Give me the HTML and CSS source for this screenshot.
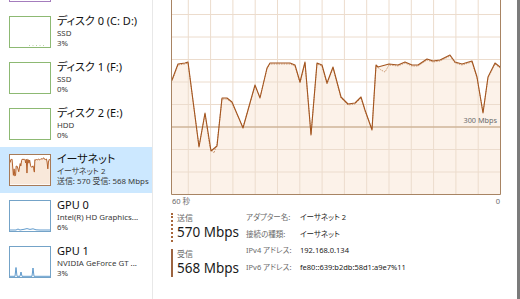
FILE: index.html
```html
<!DOCTYPE html>
<html lang="ja">
<head>
<meta charset="utf-8">
<title>パフォーマンス - イーサネット</title>
<link rel="stylesheet" href="styles.css">
</head>
<body>
<div class="window">
  <aside class="sidebar">
    <ul class="list">
      <li class="item">
        <div class="thumb thumb-mem"></div>
      </li>
      <li class="item">
        <div class="thumb thumb-disk">
          <svg viewBox="0 0 40 30"><line class="disk-dots" x1="19" y1="28.5" x2="36" y2="28.5"/></svg>
        </div>
        <div class="info"><div class="title">ディスク 0 (C: D:)</div><div class="sub">SSD</div><div class="sub">3%</div></div>
      </li>
      <li class="item">
        <div class="thumb thumb-disk"></div>
        <div class="info"><div class="title">ディスク 1 (F:)</div><div class="sub">SSD</div><div class="sub">0%</div></div>
      </li>
      <li class="item">
        <div class="thumb thumb-disk"></div>
        <div class="info"><div class="title">ディスク 2 (E:)</div><div class="sub">HDD</div><div class="sub">0%</div></div>
      </li>
      <li class="item selected">
        <div class="thumb thumb-eth">
          <svg viewBox="0 0 40 30">
            <g transform="scale(0.1212 0.19) translate(0 -40)">
              <polygon class="eth-fill" points="1,194 1,80 7,64 14,63 17,62 28,147 34,113 40,151 46,146 51,98 56,98 61,102 72,128 84,85 89,98 96,68 99,63 119,63 124,65 129,82 134,62 140,135 146,63 151,65 156,83 162,67 170,97 177,104 184,103 190,97 194,110 201,130 205,65 207,67 218,64 227,65 234,62 241,65 247,65 256,59 262,61 269,60 279,55 284,62 291,64 301,61 306,77 312,113 317,77 324,63 329,67 329,194"/>
              <polyline class="eth-line" points="1,80 7,64 14,63 17,62 28,147 34,113 40,151 46,146 51,98 56,98 61,102 72,128 84,85 89,98 96,68 99,63 119,63 124,65 129,82 134,62 140,135 146,63 151,65 156,83 162,67 170,97 177,104 184,103 190,97 194,110 201,130 205,65 207,67 218,64 227,65 234,62 241,65 247,65 256,59 262,61 269,60 279,55 284,62 291,64 301,61 306,77 312,113 317,77 324,63 329,67"/>
            </g>
          </svg>
        </div>
        <div class="info"><div class="title">イーサネット</div><div class="sub">イーサネット 2</div><div class="sub">送信: 570 受信: 568 Mbps</div></div>
      </li>
      <li class="item">
        <div class="thumb thumb-gpu">
          <svg viewBox="0 0 40 30"><polyline class="gpu-line" points="0,29 6,29 8,28 10,29 14,28.3 17,27.6 20,28.4 23,27.8 26,28.8 30,29 40,29"/></svg>
        </div>
        <div class="info"><div class="title">GPU 0</div><div class="sub">Intel(R) HD Graphics...</div><div class="sub">6%</div></div>
      </li>
      <li class="item">
        <div class="thumb thumb-gpu">
          <svg viewBox="0 0 40 30"><polyline class="gpu-line" points="0,29.3 5,29.3 6,20.5 7,29.3 10,29.3 11,25 12,29.3 22,29.3 23,21 24,29.3 40,29.3"/></svg>
        </div>
        <div class="info"><div class="title">GPU 1</div><div class="sub">NVIDIA GeForce GT ...</div><div class="sub">3%</div></div>
      </li>
    </ul>
  </aside>

  <main class="main">
    <svg class="graph" viewBox="0 0 330 195">
      <polygon class="area" points="0.5,194.5 1,80 7,64 14,63 17,62 28,147 34,113 40,151 46,146 51,98 56,98 61,102 72,128 84,85 89,98 96,68 99,63 119,63 124,65 129,82 134,62 140,135 146,63 151,65 156,83 162,67 170,97 177,104 184,103 190,97 194,110 201,130 205,65 207,67 218,64 227,65 234,62 241,65 247,65 256,59 262,61 269,60 279,55 284,62 291,64 301,61 306,77 312,113 317,77 324,63 329,67 329.5,194.5"/>
      <g class="grid">
        <line x1="17.3" y1="0" x2="17.3" y2="195"/>
        <line x1="39.6" y1="0" x2="39.6" y2="195"/>
        <line x1="61.9" y1="0" x2="61.9" y2="195"/>
        <line x1="84.2" y1="0" x2="84.2" y2="195"/>
        <line x1="106.5" y1="0" x2="106.5" y2="195"/>
        <line x1="128.8" y1="0" x2="128.8" y2="195"/>
        <line x1="151.1" y1="0" x2="151.1" y2="195"/>
        <line x1="173.4" y1="0" x2="173.4" y2="195"/>
        <line x1="195.7" y1="0" x2="195.7" y2="195"/>
        <line x1="218" y1="0" x2="218" y2="195"/>
        <line x1="240.3" y1="0" x2="240.3" y2="195"/>
        <line x1="262.6" y1="0" x2="262.6" y2="195"/>
        <line x1="284.9" y1="0" x2="284.9" y2="195"/>
        <line x1="307.2" y1="0" x2="307.2" y2="195"/>
        <line x1="0" y1="14.5" x2="330" y2="14.5"/>
        <line x1="0" y1="37" x2="330" y2="37"/>
        <line x1="0" y1="59.5" x2="330" y2="59.5"/>
        <line x1="0" y1="82" x2="330" y2="82"/>
        <line x1="0" y1="104.5" x2="330" y2="104.5"/>
        <line x1="0" y1="149.5" x2="330" y2="149.5"/>
        <line x1="0" y1="172" x2="330" y2="172"/>
      </g>
      <line class="mark" x1="0" y1="127" x2="330" y2="127"/>
      <text class="mark-label" x="326" y="122.5" text-anchor="end">300 Mbps</text>
      <polyline class="send" points="1,81 7,65 14,64 17,63 28,146 34,114 39,148 43,153 46,144 51,99 56,99 61,103 72,127 84,86 89,97 96,69 99,64 119,64 124,66 129,83 134,63 140,134 146,64 151,66 156,84 162,68 170,98 177,105 184,104 190,98 194,111 201,129 205,66 210,70 214,72 218,65 227,66 234,63 241,66 247,66 256,60 262,62 269,61 279,56 284,63 291,65 301,62 306,78 312,112 317,78 324,64 329,68"/>
      <polyline class="recv" points="1,80 7,64 14,63 17,62 28,147 34,113 40,151 46,146 51,98 56,98 61,102 72,128 84,85 89,98 96,68 99,63 119,63 124,65 129,82 134,62 140,135 146,63 151,65 156,83 162,67 170,97 177,104 184,103 190,97 194,110 201,130 205,65 207,67 218,64 227,65 234,62 241,65 247,65 256,59 262,61 269,60 279,55 284,62 291,64 301,61 306,77 312,113 317,77 324,63 329,67"/>
      <path class="frame" d="M0.5,0 V194.5 H329.5 V0"/>
    </svg>
    <div class="axis"><span>60 秒</span><span>0</span></div>
    <div class="details">
      <div class="stats">
        <div class="stat stat-send">
          <div class="stat-label">送信</div>
          <div class="stat-value">570 Mbps</div>
        </div>
        <div class="stat stat-recv">
          <div class="stat-label">受信</div>
          <div class="stat-value">568 Mbps</div>
        </div>
      </div>
      <dl class="props">
        <dt>アダプター名:</dt><dd>イーサネット 2</dd>
        <dt>接続の種類:</dt><dd>イーサネット</dd>
        <dt>IPv4 アドレス:</dt><dd>192.168.0.134</dd>
        <dt>IPv6 アドレス:</dt><dd>fe80::639:b2db:58d1:a9e7%11</dd>
      </dl>
    </div>
  </main>
</div>
</body>
</html>
```

FILE: styles.css
```css
html, body {
  margin: 0;
  padding: 0;
  background: #ffffff;
}

body {
  font-family: "Noto Sans", "Noto Sans CJK JP", sans-serif;
  font-feature-settings: "palt";
  color: #1a1a1a;
}

.window {
  display: flex;
  width: 520px;
  height: 299px;
  overflow: hidden;
  box-sizing: border-box;
  border-right: 3px solid #7b7b7b;
  background: #ffffff;
}

/* ---------- sidebar ---------- */
.sidebar {
  flex: none;
  width: 152px;
  border-right: 1px solid #e8e8e8;
  overflow: hidden;
}

.list {
  margin: -37px 0 0;
  padding: 0;
  list-style: none;
}

.item {
  display: flex;
  gap: 6px;
  height: 46px;
  box-sizing: border-box;
  padding: 7px 0 0 9px;
}

.item.selected {
  background: #cce8ff;
}

.thumb {
  flex: none;
  width: 42px;
  height: 32px;
  box-sizing: border-box;
  border: 1px solid;
  background: #ffffff;
}

.thumb svg {
  display: block;
  width: 40px;
  height: 30px;
}

.thumb-mem { border-color: #a47cbd; }
.thumb-disk { border-color: #8db973; }
.thumb-eth { border-color: #a87b58; }
.thumb-gpu { border-color: #74a3c8; }

.disk-dots {
  stroke: #b9d4a6;
  stroke-width: 1;
  stroke-dasharray: 1 2.5;
}

.eth-fill {
  fill: #f8e8da;
}

.eth-line {
  fill: none;
  stroke: #b3602a;
  stroke-width: 1;
  vector-effect: non-scaling-stroke;
}

.gpu-line {
  fill: none;
  stroke: #4f90c6;
  stroke-width: 0.9;
}

.info {
  margin-top: -2px;
  min-width: 0;
  white-space: nowrap;
}

.title {
  font-size: 11px;
  line-height: 14px;
  color: #111111;
}

.sub {
  font-size: 7.9px;
  line-height: 10px;
  color: #3a3a3a;
}

/* ---------- main ---------- */
.main {
  flex: 1;
  padding-left: 18px;
  min-width: 0;
}

.graph {
  display: block;
  width: 330px;
  height: 195px;
}

.area {
  fill: #fcf2e9;
}

.grid line {
  stroke: #ecdccd;
  stroke-width: 1;
}

.mark {
  stroke: #cfb498;
  stroke-width: 1.6;
}

.mark-label {
  font-family: "Noto Sans", sans-serif;
  font-size: 7.3px;
  fill: #6b6b6b;
}

.send {
  fill: none;
  stroke: #b97a4b;
  stroke-width: 0.7;
  stroke-dasharray: 1.5 1;
}

.recv {
  fill: none;
  stroke: #a3551f;
  stroke-width: 1.1;
  stroke-linejoin: round;
}

.frame {
  fill: none;
  stroke: #a88463;
  stroke-width: 1;
}

.axis {
  display: flex;
  justify-content: space-between;
  width: 330px;
  box-sizing: border-box;
  padding: 0 1px 0 1px;
  height: 12px;
  font-size: 7.5px;
  line-height: 12px;
  color: #6b6b6b;
}

.details {
  display: flex;
  margin-top: 4px;
}

.stats {
  flex: none;
  width: 75px;
}

.stat {
  padding-left: 4px;
}

.stat-send {
  margin-top: 2px;
  height: 29px;
  border-left: 2px dotted #a8683c;
}

.stat-recv {
  margin-top: 7px;
  height: 28px;
  border-left: 2px solid #9c6440;
}

.stat-label {
  font-size: 8px;
  line-height: 10px;
  color: #6b6b6b;
}

.stat-value {
  font-size: 13.5px;
  line-height: 19px;
  color: #1a1a1a;
  white-space: nowrap;
}

.props {
  display: grid;
  grid-template-columns: 54px auto;
  margin: 0;
  font-size: 7.5px;
  line-height: 12px;
  white-space: nowrap;
}

.props dt {
  color: #6b6b6b;
}

.props dd {
  margin: 0;
  color: #1a1a1a;
}
```
